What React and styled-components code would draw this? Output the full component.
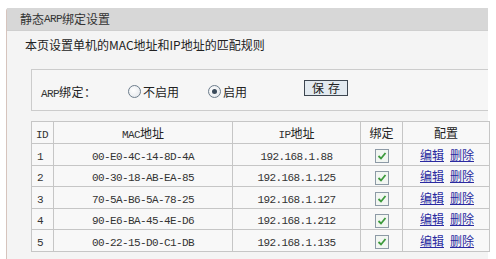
import React from "react";
import styled, { createGlobalStyle } from "styled-components";

const GlobalStyle = createGlobalStyle`
  html, body {
    margin: 0;
    padding: 0;
    background: #ffffff;
  }
  body {
    font-family: "Noto Sans CJK SC", "Liberation Sans", sans-serif;
    font-size: 12px;
    color: #222;
  }
`;

const rows = [
  { id: 1, mac: "00-E0-4C-14-8D-4A", ip: "192.168.1.88" },
  { id: 2, mac: "00-30-18-AB-EA-85", ip: "192.168.1.125" },
  { id: 3, mac: "70-5A-B6-5A-78-25", ip: "192.168.1.127" },
  { id: 4, mac: "90-E6-BA-45-4E-D6", ip: "192.168.1.212" },
  { id: 5, mac: "00-22-15-D0-C1-DB", ip: "192.168.1.135" },
];

const Page = styled.div`
  width: 496px;
  height: 259px;
  overflow: hidden;
  padding-top: 8px;
  box-sizing: border-box;
`;

const Panel = styled.div`
  margin-left: 6px;
  width: 482px;
  height: 251px;
  border-left: 1px solid #d6c4bd;
  border-top-left-radius: 3px;
  background: #f4f4f4;
  box-sizing: border-box;
`;

const TitleBar = styled.div`
  height: 22px;
  background: #d7d7d7;
  border-bottom: 1px solid #cfcfcf;
  display: flex;
  align-items: center;
  padding-left: 13px;
  color: #333;
  line-height: 1;
`;

const Body = styled.div`
  padding: 3px 0 0 24px;
`;

const Desc = styled.div`
  height: 20px;
  display: flex;
  align-items: center;
  margin-left: -6px;
  color: #222;
`;

const BindBox = styled.div`
  margin-top: 15px;
  height: 42px;
  border: 1px solid #cccccc;
  border-right: none;
  background: #f6f6f6;
  display: flex;
  align-items: center;
  padding-left: 9px;
  padding-top: 2px;
  box-sizing: border-box;
`;

const Label = styled.span`
  width: 87px;
  color: #222;
  letter-spacing: 0.5px;
`;

const Radio = styled.label`
  display: flex;
  align-items: center;
  gap: 2px;
  margin-right: ${(p) => p.$gap}px;
  color: #222;
`;

const Circle = styled.span`
  width: 11px;
  height: 11px;
  border-radius: 50%;
  border: 1px solid #6d7d8c;
  background: radial-gradient(circle at 40% 40%, #ffffff, #dfe3e8);
  display: flex;
  align-items: center;
  justify-content: center;
  &::after {
    content: "";
    width: 5px;
    height: 5px;
    border-radius: 50%;
    background: ${(p) => (p.$on ? "#3a4a5a" : "transparent")};
  }
`;

const SaveButton = styled.button`
  margin-left: 57px;
  margin-top: -6px;
  width: 44px;
  height: 16px;
  padding: 0;
  border: 1px solid #3d4650;
  background: #e3eaf0;
  font-family: "Noto Sans CJK SC", sans-serif;
  font-size: 12px;
  line-height: 14px;
  color: #222;
  letter-spacing: 4px;
  text-indent: 4px;
`;

const Table = styled.table`
  margin-top: 10px;
  width: 458px;
  border-collapse: collapse;
  background: #f8f8f8;
  table-layout: fixed;
`;

const Th = styled.th`
  height: 21px;
  border: 1px solid #c6c6c6;
  font-weight: normal;
  color: #222;
  text-align: ${(p) => (p.$left ? "left" : "center")};
  padding: 0 0 0 ${(p) => (p.$left ? "4px" : "0")};
  font-size: 12px;
`;

const Td = styled.td`
  height: 20.5px;
  border: 1px solid #c6c6c6;
  text-align: ${(p) => (p.$left ? "left" : "center")};
  padding: 0 0 0 ${(p) => (p.$left ? "5px" : "0")};
  color: #333;
`;

const Mono = styled.span`
  font-family: "Liberation Mono", monospace;
  font-size: 11px;
  letter-spacing: -0.6px;
  color: #333;
`;

const Check = styled.span`
  display: inline-flex;
  width: 12px;
  height: 12px;
  border: 1px solid #8d9aa6;
  background: #f2f6f2;
  vertical-align: middle;
  align-items: center;
  justify-content: center;
`;

const Links = styled.div`
  display: flex;
  gap: 6px;
  justify-content: center;
  padding-left: 2px;
`;

const Link = styled.a`
  color: #2a2aa0;
  text-decoration: underline;
  cursor: pointer;
`;

export default function App() {
  return (
    <>
      <GlobalStyle />
      <Page>
        <Panel>
          <TitleBar>
            静态<Mono>ARP</Mono>绑定设置
          </TitleBar>
          <Body>
            <Desc>本页设置单机的MAC地址和IP地址的匹配规则</Desc>
            <BindBox>
              <Label>
                <Mono>ARP</Mono>绑定：
              </Label>
              <Radio $gap={29}>
                <Circle />
                不启用
              </Radio>
              <Radio $gap={0}>
                <Circle $on />
                启用
              </Radio>
              <SaveButton>保存</SaveButton>
            </BindBox>
            <Table>
              <colgroup>
                <col style={{ width: 22 }} />
                <col style={{ width: 179 }} />
                <col style={{ width: 128 }} />
                <col style={{ width: 42 }} />
                <col style={{ width: 87 }} />
              </colgroup>
              <thead>
                <tr>
                  <Th $left>
                    <Mono>ID</Mono>
                  </Th>
                  <Th>
                    <Mono>MAC</Mono>地址
                  </Th>
                  <Th>
                    <Mono>IP</Mono>地址
                  </Th>
                  <Th>绑定</Th>
                  <Th>配置</Th>
                </tr>
              </thead>
              <tbody>
                {rows.map((r) => (
                  <tr key={r.id}>
                    <Td $left>
                      <Mono>{r.id}</Mono>
                    </Td>
                    <Td>
                      <Mono>{r.mac}</Mono>
                    </Td>
                    <Td>
                      <Mono>{r.ip}</Mono>
                    </Td>
                    <Td>
                      <Check>
                        <svg width="10" height="10" viewBox="0 0 10 10">
                          <path
                            d="M1.5 5 L4 7.5 L8.5 2"
                            fill="none"
                            stroke="#3c9a3c"
                            strokeWidth="1.8"
                          />
                        </svg>
                      </Check>
                    </Td>
                    <Td>
                      <Links>
                        <Link>编辑</Link>
                        <Link>删除</Link>
                      </Links>
                    </Td>
                  </tr>
                ))}
              </tbody>
            </Table>
          </Body>
        </Panel>
      </Page>
    </>
  );
}
